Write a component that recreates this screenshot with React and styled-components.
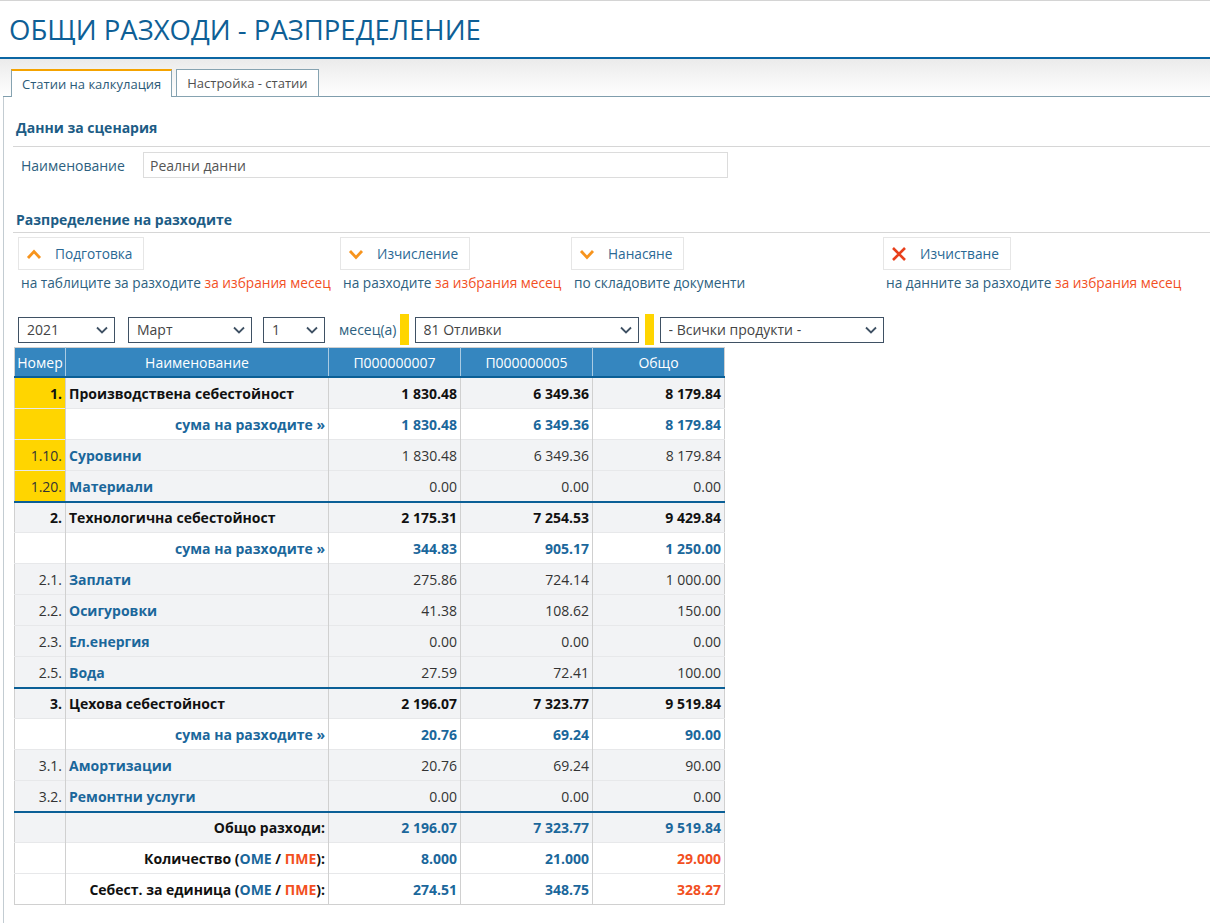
import React from "react";
import styled, { createGlobalStyle } from "styled-components";

const BLUE = "#1b679b";
const RED = "#f2501f";
const ORANGE = "#f7941d";
const DARK = "#2d5f80";

const GlobalStyle = createGlobalStyle`
  html, body {
    margin: 0;
    padding: 0;
    background: #fff;
    font-family: "Open Sans", "Noto Sans", "Liberation Sans", sans-serif;
    font-size: 14px;
    color: #222;
  }
`;

const Header = styled.header`
  border-top: 1px solid #d4d4d4;
  height: 56px;
  display: flex;
  align-items: center;
  padding-left: 9px;
  border-bottom: 2px solid #0b66a3;
  h1 {
    margin: 0;
    font-weight: 400;
    font-size: 27.5px;
    color: #0e5f96;
  }
`;

const TabStrip = styled.div`
  background: linear-gradient(#ebebeb, #fff);
`;

const TabBar = styled.div`
  display: flex;
  align-items: flex-end;
  gap: 4px;
  height: 37px;
  margin-left: 3px;
  padding-left: 8px;
  border-bottom: 1px solid #7f9dac;
`;

const Tab = styled.div`
  height: ${(p) => (p.$active ? "25px" : "26px")};
  padding: 0 10px;
  display: flex;
  align-items: center;
  font-size: 13px;
  background: #fff;
  color: ${(p) => (p.$active ? "#2b5a78" : "#505050")};
  border: 1px solid #86a3b1;
  border-top: ${(p) => (p.$active ? "2px solid #f5a300" : "1px solid #86a3b1")};
  border-bottom: ${(p) => (p.$active ? "none" : "1px solid #86a3b1")};
  margin-bottom: -1px;
  padding-bottom: ${(p) => (p.$active ? "1px" : "0")};
`;

const Panel = styled.div`
  display: flow-root;
  margin-left: 3px;
  border-left: 1px solid #c3ccd2;
  padding: 0 0 18px 9px;
  min-height: calc(100vh - 115px);
  background: #fff;
`;

const SectionTitle = styled.div`
  margin-top: ${(p) => p.$top}px;
  padding: 0 0 ${(p) => p.$bottom}px 3px;
  border-bottom: 1px solid #d6d6d6;
  font-weight: 700;
  font-size: 14px;
  line-height: 20px;
  color: #1d5c85;
`;

const FieldRow = styled.div`
  display: flex;
  align-items: center;
  margin-top: 5px;
  padding-left: 8px;
  label {
    width: 122px;
    color: ${DARK};
  }
`;

const TextInput = styled.input`
  box-sizing: border-box;
  width: 585px;
  height: 26px;
  border: 1px solid #dcdcdc;
  padding: 0 6px;
  font: inherit;
  color: #555;
  outline: none;
`;

const Actions = styled.div`
  display: flex;
  margin-top: 4px;
  padding-left: 5px;
  font-size: 13.7px;
`;

const ActionCol = styled.div`
  width: ${(p) => p.$w}px;
  flex: ${(p) => (p.$w ? "none" : "1")};
`;

const ActionButton = styled.button`
  box-sizing: border-box;
  height: 33px;
  display: inline-flex;
  align-items: center;
  gap: 13px;
  padding: 0 11px 0 7px;
  background: #fff;
  border: 1px solid #e6e6e6;
  font: inherit;
  color: #2a6894;
  cursor: pointer;
`;

const Hint = styled.div`
  padding-left: 3px;
  margin-top: 3px;
  line-height: 20px;
  color: ${DARK};
  white-space: nowrap;
  em {
    font-style: normal;
    color: ${RED};
  }
`;

const Filters = styled.div`
  display: flex;
  align-items: center;
  margin-top: 21px;
  padding-left: 5px;
`;

const SelectWrap = styled.div`
  position: relative;
  width: ${(p) => p.$w}px;
  margin-right: ${(p) => p.$mr || 0}px;
  select {
    box-sizing: border-box;
    width: 100%;
    height: 26px;
    appearance: none;
    -webkit-appearance: none;
    border: 1px solid #3f5164;
    border-radius: 0;
    background: #fff;
    padding: 0 24px 0 8px;
    font: inherit;
    color: #444;
    outline: none;
  }
  svg {
    position: absolute;
    right: 7px;
    top: 9px;
    pointer-events: none;
  }
`;

const FilterLabel = styled.span`
  margin: 0 3px;
  color: ${DARK};
`;

const Marker = styled.span`
  width: 9px;
  height: 31px;
  background: #ffd500;
  margin-right: 6px;
`;

const Table = styled.table`
  margin-top: 2px;
  margin-left: 1px;
  border-collapse: collapse;
  width: 711px;
  table-layout: fixed;
  border: 1px solid #d0d0d0;
`;

const Th = styled.th`
  height: 28px;
  padding: 0;
  background: #3586bf;
  color: #fff;
  font-weight: 400;
  font-size: 14px;
  border-left: 1px solid #a9cbe3;
  border-bottom: 2px solid #0b5f96;
  &:first-child {
    border-left: none;
  }
`;

const Tr = styled.tr`
  background: ${(p) => (p.$white ? "#fff" : "#f2f3f5")};
  td {
    height: ${(p) => (p.$sep ? "29px" : "30px")};
    border-top: ${(p) => (p.$sep ? "2px solid #0b5f96" : "1px solid #e7e8ea")};
  }
`;

const Td = styled.td`
  padding: 0 3px;
  border-left: 1px solid #d0d0d0;
  text-align: ${(p) => p.$align || "right"};
  font-weight: ${(p) => (p.$bold ? 700 : 400)};
  color: ${(p) => p.$color || "#333"};
  white-space: nowrap;
  background: ${(p) => (p.$yellow ? "#ffd500" : "transparent")};
  &:first-child {
    border-left: none;
  }
`;

const Blue = styled.span`
  color: ${BLUE};
`;
const Red = styled.span`
  color: ${RED};
`;

const ChevronUp = () => (
  <svg width="16" height="12" viewBox="0 0 16 12">
    <path d="M2 10 L8 3.5 L14 10" fill="none" stroke={ORANGE} strokeWidth="2.8" />
  </svg>
);

const ChevronDown = () => (
  <svg width="16" height="12" viewBox="0 0 16 12">
    <path d="M2 3 L8 9.5 L14 3" fill="none" stroke={ORANGE} strokeWidth="2.8" />
  </svg>
);

const Cross = () => (
  <svg width="16" height="16" viewBox="0 0 16 16">
    <path d="M2 2 L14 14 M14 2 L2 14" fill="none" stroke="#e8401c" strokeWidth="2.6" />
  </svg>
);

const SelectArrow = () => (
  <svg width="12" height="8" viewBox="0 0 12 8">
    <path d="M1 1.5 L6 6.5 L11 1.5" fill="none" stroke="#3f5164" strokeWidth="1.8" />
  </svg>
);

const Select = ({ w, mr, value }) => (
  <SelectWrap $w={w} $mr={mr}>
    <select defaultValue={value}>
      <option>{value}</option>
    </select>
    <SelectArrow />
  </SelectWrap>
);

const groups = [
  {
    num: "1.",
    name: "Производствена себестойност",
    vals: ["1 830.48", "6 349.36", "8 179.84"],
    sum: ["1 830.48", "6 349.36", "8 179.84"],
    yellow: true,
    items: [
      ["1.10.", "Суровини", "1 830.48", "6 349.36", "8 179.84"],
      ["1.20.", "Материали", "0.00", "0.00", "0.00"],
    ],
  },
  {
    num: "2.",
    name: "Технологична себестойност",
    vals: ["2 175.31", "7 254.53", "9 429.84"],
    sum: ["344.83", "905.17", "1 250.00"],
    items: [
      ["2.1.", "Заплати", "275.86", "724.14", "1 000.00"],
      ["2.2.", "Осигуровки", "41.38", "108.62", "150.00"],
      ["2.3.", "Ел.енергия", "0.00", "0.00", "0.00"],
      ["2.5.", "Вода", "27.59", "72.41", "100.00"],
    ],
  },
  {
    num: "3.",
    name: "Цехова себестойност",
    vals: ["2 196.07", "7 323.77", "9 519.84"],
    sum: ["20.76", "69.24", "90.00"],
    items: [
      ["3.1.", "Амортизации", "20.76", "69.24", "90.00"],
      ["3.2.", "Ремонтни услуги", "0.00", "0.00", "0.00"],
    ],
  },
];

const Unit = () => (
  <>
    (<Blue>ОМЕ</Blue> / <Red>ПМЕ</Red>):
  </>
);

export default function App() {
  return (
    <>
      <GlobalStyle />
      <Header>
        <h1>ОБЩИ РАЗХОДИ - РАЗПРЕДЕЛЕНИЕ</h1>
      </Header>
      <TabStrip>
        <TabBar>
          <Tab $active>Статии на калкулация</Tab>
          <Tab>Настройка - статии</Tab>
        </TabBar>
      </TabStrip>
      <Panel>
        <SectionTitle $top={21} $bottom={8}>Данни за сценария</SectionTitle>
        <FieldRow>
          <label>Наименование</label>
          <TextInput defaultValue="Реални данни" />
        </FieldRow>

        <SectionTitle $top={32} $bottom={2}>Разпределение на разходите</SectionTitle>
        <Actions>
          <ActionCol $w={322}>
            <ActionButton>
              <ChevronUp />
              Подготовка
            </ActionButton>
            <Hint>
              на таблиците за разходите <em>за избрания месец</em>
            </Hint>
          </ActionCol>
          <ActionCol $w={231}>
            <ActionButton>
              <ChevronDown />
              Изчисление
            </ActionButton>
            <Hint>
              на разходите <em>за избрания месец</em>
            </Hint>
          </ActionCol>
          <ActionCol $w={312}>
            <ActionButton>
              <ChevronDown />
              Нанасяне
            </ActionButton>
            <Hint>по складовите документи</Hint>
          </ActionCol>
          <ActionCol>
            <ActionButton>
              <Cross />
              Изчистване
            </ActionButton>
            <Hint>
              на данните за разходите <em>за избрания месец</em>
            </Hint>
          </ActionCol>
        </Actions>

        <Filters>
          <Select w={97} mr={13} value="2021" />
          <Select w={124} mr={11} value="Март" />
          <Select w={62} mr={11} value="1" />
          <FilterLabel>месец(а)</FilterLabel>
          <Marker />
          <Select w={224} mr={6} value="81 Отливки" />
          <Marker />
          <Select w={224} value="- Всички продукти -" />
        </Filters>

        <Table>
          <colgroup>
            <col style={{ width: 51 }} />
            <col style={{ width: 263 }} />
            <col style={{ width: 132 }} />
            <col style={{ width: 132 }} />
            <col style={{ width: 132 }} />
          </colgroup>
          <thead>
            <tr>
              <Th>Номер</Th>
              <Th>Наименование</Th>
              <Th>П000000007</Th>
              <Th>П000000005</Th>
              <Th>Общо</Th>
            </tr>
          </thead>
          <tbody>
            {groups.map((g, gi) => (
              <React.Fragment key={g.num}>
                <Tr $sep={gi > 0}>
                  <Td $bold $color="#111" $yellow={g.yellow}>{g.num}</Td>
                  <Td $bold $color="#111" $align="left">{g.name}</Td>
                  {g.vals.map((v, i) => (
                    <Td key={i} $bold $color="#111">{v}</Td>
                  ))}
                </Tr>
                <Tr $white>
                  <Td $yellow={g.yellow} />
                  <Td $bold $color={BLUE}>сума на разходите »</Td>
                  {g.sum.map((v, i) => (
                    <Td key={i} $bold $color={BLUE}>{v}</Td>
                  ))}
                </Tr>
                {g.items.map(([num, name, ...vals]) => (
                  <Tr key={num}>
                    <Td $yellow={g.yellow}>{num}</Td>
                    <Td $bold $color={BLUE} $align="left">{name}</Td>
                    {vals.map((v, i) => (
                      <Td key={i}>{v}</Td>
                    ))}
                  </Tr>
                ))}
              </React.Fragment>
            ))}
            <Tr $sep>
              <Td />
              <Td $bold $color="#111">Общо разходи:</Td>
              <Td $bold $color={BLUE}>2 196.07</Td>
              <Td $bold $color={BLUE}>7 323.77</Td>
              <Td $bold $color={BLUE}>9 519.84</Td>
            </Tr>
            <Tr $white>
              <Td />
              <Td $bold $color="#111">
                Количество <Unit />
              </Td>
              <Td $bold $color={BLUE}>8.000</Td>
              <Td $bold $color={BLUE}>21.000</Td>
              <Td $bold $color={RED}>29.000</Td>
            </Tr>
            <Tr $white>
              <Td />
              <Td $bold $color="#111">
                Себест. за единица <Unit />
              </Td>
              <Td $bold $color={BLUE}>274.51</Td>
              <Td $bold $color={BLUE}>348.75</Td>
              <Td $bold $color={RED}>328.27</Td>
            </Tr>
          </tbody>
        </Table>
      </Panel>
    </>
  );
}
